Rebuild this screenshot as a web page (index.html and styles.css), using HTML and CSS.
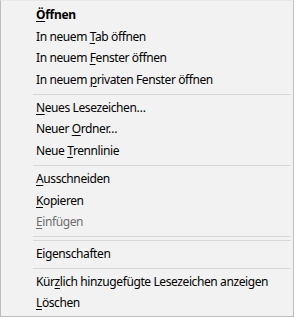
FILE: index.html
```html
<!DOCTYPE html>
<html lang="de">
<head>
    <meta charset="UTF-8">
    <title>Kontextmenü</title>
    <link rel="stylesheet" href="styles.css">
</head>
<body>
    <div class="menu">
        <div class="item default"><u>Ö</u>ffnen</div>
        <div class="item">In neuem <u>T</u>ab öffnen</div>
        <div class="item">In neuem <u>F</u>enster öffnen</div>
        <div class="item">In neuem <u>p</u>rivaten Fenster öffnen</div>
        <div class="sep"></div>
        <div class="item"><u>N</u>eues Lesezeichen…</div>
        <div class="item">Neuer <u>O</u>rdner…</div>
        <div class="item">Neue <u>T</u>rennlinie</div>
        <div class="sep"></div>
        <div class="item"><u>A</u>usschneiden</div>
        <div class="item"><u>K</u>opieren</div>
        <div class="item disabled"><u>E</u>infügen</div>
        <div class="sep"></div>
        <div class="sep tight"></div>
        <div class="item">Eigenschaften</div>
        <div class="sep"></div>
        <div class="item">Kür<u>z</u>lich hinzugefügte Lesezeichen anzeigen</div>
        <div class="item"><u>L</u>öschen</div>
    </div>
</body>
</html>
```

FILE: styles.css
```css
body {
    margin: 0;
    background-color: #fff;
    font-family: "Noto Sans", "Open Sans", sans-serif;
    font-size: 12px;
    color: #000;
}
.menu {
    width: 294px;
    height: 317px;
    box-sizing: border-box;
    background-color: #f2f2f2;
    border: 1px solid #bcbcbc;
    border-top-color: #e8e8e8;
    padding: 3px 2px 0 2px;
    display: flex;
    flex-direction: column;
    overflow: hidden;
}
.item {
    flex-shrink: 0;
    height: 21.7px;
    line-height: 21.7px;
    padding-left: 33px;
    letter-spacing: -0.4px;
    white-space: nowrap;
}
.item u {
    text-decoration-thickness: 1px;
    text-underline-offset: 2px;
}
.item.default {
    font-weight: bold;
    letter-spacing: -0.3px;
}
.item.disabled {
    color: #6d6d6d;
}
.sep {
    flex-shrink: 0;
    height: 1px;
    margin: 3px 0 2px 30px;
    background-color: #d7d7d7;
}
.sep.tight {
    margin-top: 1px;
}
```
